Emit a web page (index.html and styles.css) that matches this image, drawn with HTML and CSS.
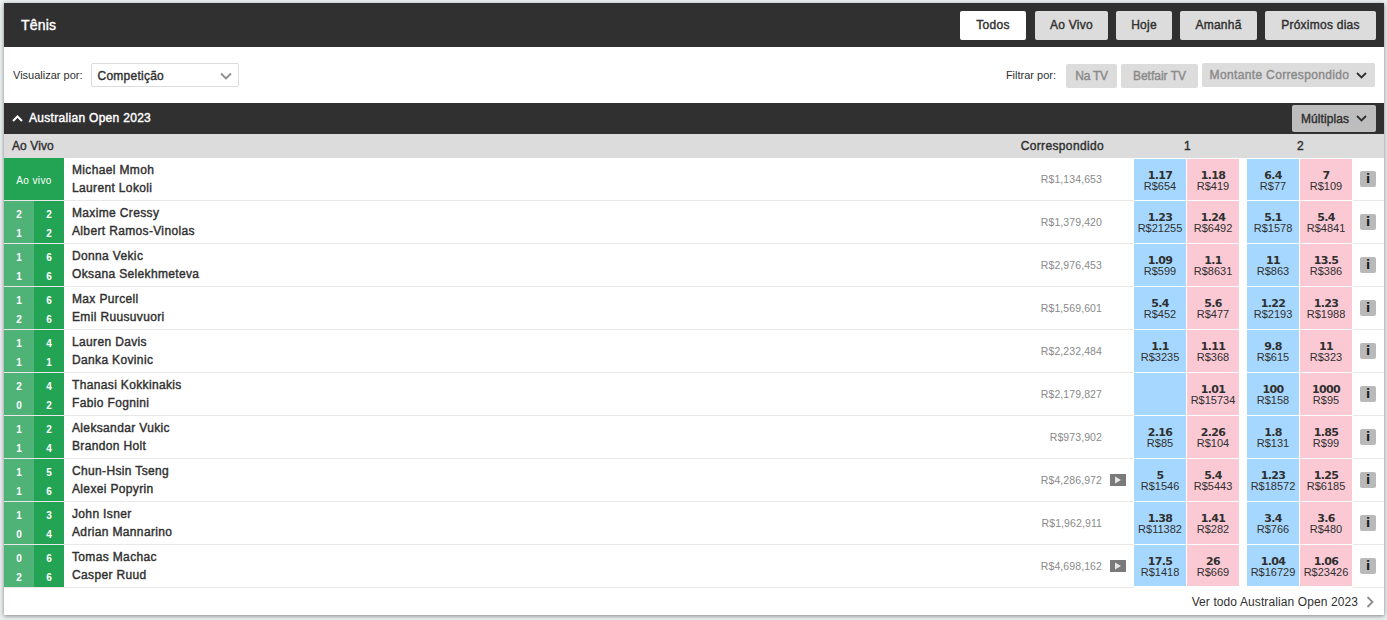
FILE: index.html
```html
<!DOCTYPE html>
<html lang="pt">
<head>
<meta charset="utf-8">
<title>Tênis</title>
<link rel="stylesheet" href="styles.css">
</head>
<body>
<main class="card">
  <header class="top">
    <h1 class="title">Tênis</h1>
    <nav class="tabs">
      <a class="tab tab-on">Todos</a><a class="tab">Ao Vivo</a><a class="tab">Hoje</a><a class="tab">Amanhã</a><a class="tab">Próximos dias</a>
    </nav>
  </header>
  <section class="filters">
    <span class="lbl">Visualizar por:</span>
    <div class="select"><span>Competição</span><svg class="chev" width="12" height="8" viewBox="0 0 12 8"><path d="M1 1.500l5 5 5-5" fill="none" stroke="#8c8c8c" stroke-width="1.800"/></svg></div>
    <span class="lbl lbl-right">Filtrar por:</span>
    <span class="fbtn fbtn-a">Na TV</span>
    <span class="fbtn fbtn-b">Betfair TV</span>
    <span class="fbtn fbtn-c">Montante Correspondido<svg class="chev" width="11" height="7" viewBox="0 0 11 7"><path d="M1 1l4.500 4.500L10 1" fill="none" stroke="#303030" stroke-width="1.800"/></svg></span>
  </section>
  <section class="comp">
    <svg width="11" height="7" viewBox="0 0 11 7"><path d="M1 6l4.500-4.500L10 6" fill="none" stroke="#fff" stroke-width="2"/></svg>
    <h2 class="comp-name">Australian Open 2023</h2>
    <span class="mult">Múltiplas<svg width="11" height="7" viewBox="0 0 11 7"><path d="M1 1l4.500 4.500L10 1" fill="none" stroke="#303030" stroke-width="1.800"/></svg></span>
  </section>
  <div class="cols">
    <span class="c-live">Ao Vivo</span>
    <span class="c-matched">Correspondido</span>
    <span class="c-1">1</span>
    <span class="c-2">2</span>
  </div>
  <div id="rows"></div>
  <footer class="foot">Ver todo Australian Open 2023<svg width="8" height="12" viewBox="0 0 8 12"><path d="M1.500 1l5 5-5 5" fill="none" stroke="#8c8c8c" stroke-width="1.800"/></svg></footer>
</main>
<script src="app.js"></script>
</body>
</html>
```
FILE: app.js
```js
var data = [
  [null,null,"Michael Mmoh","Laurent Lokoli","R$1,134,653",0,[["1.17","R$654"],["1.18","R$419"],["6.4","R$77"],["7","R$109"]]],
  ["21","22","Maxime Cressy","Albert Ramos-Vinolas","R$1,379,420",0,[["1.23","R$21255"],["1.24","R$6492"],["5.1","R$1578"],["5.4","R$4841"]]],
  ["11","66","Donna Vekic","Oksana Selekhmeteva","R$2,976,453",0,[["1.09","R$599"],["1.1","R$8631"],["11","R$863"],["13.5","R$386"]]],
  ["12","66","Max Purcell","Emil Ruusuvuori","R$1,569,601",0,[["5.4","R$452"],["5.6","R$477"],["1.22","R$2193"],["1.23","R$1988"]]],
  ["11","41","Lauren Davis","Danka Kovinic","R$2,232,484",0,[["1.1","R$3235"],["1.11","R$368"],["9.8","R$615"],["11","R$323"]]],
  ["20","42","Thanasi Kokkinakis","Fabio Fognini","R$2,179,827",0,[null,["1.01","R$15734"],["100","R$158"],["1000","R$95"]]],
  ["11","24","Aleksandar Vukic","Brandon Holt","R$973,902",0,[["2.16","R$85"],["2.26","R$104"],["1.8","R$131"],["1.85","R$99"]]],
  ["11","56","Chun-Hsin Tseng","Alexei Popyrin","R$4,286,972",1,[["5","R$1546"],["5.4","R$5443"],["1.23","R$18572"],["1.25","R$6185"]]],
  ["10","34","John Isner","Adrian Mannarino","R$1,962,911",0,[["1.38","R$11382"],["1.41","R$282"],["3.4","R$766"],["3.6","R$480"]]],
  ["02","66","Tomas Machac","Casper Ruud","R$4,698,162",1,[["17.5","R$1418"],["26","R$669"],["1.04","R$16729"],["1.06","R$23426"]]]
];
var html = "";
data.forEach(function (r) {
  var live = r[0] === null
    ? '<div class="live">Ao vivo</div>'
    : '<div class="score"><div class="set set-a"><span>' + r[0][0] + '</span><span>' + r[0][1] + '</span></div><div class="set set-b"><span>' + r[1][0] + '</span><span>' + r[1][1] + '</span></div></div>';
  var tv = r[5]
    ? '<span class="tv"><svg width="8" height="8" viewBox="0 0 8 8"><path d="M1 0.500l6 3.500-6 3.500z" fill="#e6e6e6"/></svg></span>'
    : '<span class="tv tv-off"></span>';
  var odds = r[6].map(function (o, i) {
    var cls = "odd " + (i % 2 ? "lay" : "back") + (i === 2 ? " gap" : "");
    return o ? '<div class="' + cls + '"><b>' + o[0] + '</b><span>' + o[1] + '</span></div>' : '<div class="' + cls + '"></div>';
  }).join("");
  html += '<div class="row">' + live +
    '<div class="names"><span>' + r[2] + '</span><span>' + r[3] + '</span></div>' +
    '<div class="matched">' + r[4] + '</div>' + tv +
    '<div class="odds">' + odds + '</div>' +
    '<div class="info-wrap"><span class="info">i</span></div></div>';
});
document.getElementById("rows").innerHTML = html;
```
FILE: styles.css
```css
* { box-sizing: border-box; }
html, body { height: 100%; }
body {
  margin: 0;
  padding: 3px 3px 5px 4px;
  background: #e9eeee;
  font-family: "Liberation Sans", Arial, sans-serif;
  font-size: 12px;
  color: #303030;
  overflow: hidden;
}
.card {
  background: #fff;
  height: 612px;
  box-shadow: 0 1px 4px rgba(0, 0, 0, .45);
}
.title, .tab, .select, .fbtn, .comp-name, .mult, .cols, .names {
  font-weight: 400;
  -webkit-text-stroke: .4px currentColor;
  letter-spacing: .35px;
}
.top {
  height: 44px;
  background: #303030;
  display: flex;
  align-items: center;
  justify-content: space-between;
  padding: 0 8px 0 17px;
}
.title { margin: 0; color: #fff; font-size: 14px; letter-spacing: .2px; }
.tabs { display: flex; gap: 8px; margin-top: 1px; }
.tab {
  height: 29px;
  line-height: 29px;
  text-align: center;
  background: #dcdcdc;
  border-radius: 2px;
  font-size: 12px;
  letter-spacing: .25px;
  color: #303030;
}
.tab:nth-child(1) { width: 66px; margin-right: 1px; background: #fff; }
.tab:nth-child(2) { width: 73px; }
.tab:nth-child(3) { width: 56px; }
.tab:nth-child(4) { width: 77px; }
.tab:nth-child(5) { width: 111px; }
.filters {
  height: 56px;
  display: flex;
  align-items: center;
  padding: 0 9px;
}
.lbl { font-size: 11px; color: #303030; }
.lbl-right { margin-left: auto; margin-right: 10px; }
.select {
  width: 148px;
  height: 24px;
  margin-left: 8px;
  padding: 1px 6px 0;
  border: 1px solid #dcdcdc;
  border-radius: 2px;
  display: flex;
  align-items: center;
  justify-content: space-between;
  font-size: 12px;
  letter-spacing: .25px;
  color: #303030;
}
.fbtn {
  height: 24px;
  display: inline-flex;
  align-items: center;
  justify-content: center;
  gap: 7px;
  background: #dcdcdc;
  color: #8a8a8a;
  font-size: 12px;
  border-radius: 2px;
  margin-left: 4px;
}
.fbtn-a { width: 51px; margin-left: 0; margin-top: 2px; letter-spacing: -.3px; }
.fbtn-b { width: 77px; margin-top: 2px; letter-spacing: 0; }
.fbtn-c { width: 173px; }
.comp {
  height: 31px;
  background: #303030;
  display: flex;
  align-items: center;
  padding: 0 8px;
  color: #fff;
}
.comp-name { margin: 0 0 1px 6px; font-size: 12px; letter-spacing: .3px; }
.mult {
  margin-left: auto;
  width: 84px;
  height: 27px;
  display: inline-flex;
  align-items: center;
  justify-content: center;
  gap: 7px;
  background: #bdbdbd;
  border-radius: 2px;
  color: #303030;
  font-size: 12px;
  letter-spacing: .1px;
}
.cols {
  height: 24px;
  background: #dcdcdc;
  display: flex;
  align-items: center;
  font-size: 12px;
  letter-spacing: .35px;
}
.c-live { margin-left: 8px; letter-spacing: .1px; }
.c-matched { margin-left: auto; width: 100px; text-align: right; }
.c-1, .c-2 { width: 113px; text-align: center; }
.c-1 { margin-left: 27px; }
.c-2 { margin-right: 27px; }
.row {
  height: 43px;
  display: flex;
  border-bottom: 1px solid #e9e9e9;
  background: #fff;
}
.live {
  width: 60px;
  padding-top: 3px;
  background: #23a455;
  color: #fff;
  font-size: 10px;
  display: flex;
  align-items: center;
  justify-content: center;
  letter-spacing: .4px;
}
.score { width: 60px; display: flex; }
.set {
  flex: 1;
  padding-top: 3px;
  display: flex;
  flex-direction: column;
  justify-content: center;
  gap: 8px;
  align-items: center;
  color: #fff;
  font-size: 10px;
  font-weight: 700;
  line-height: 11px;
}
.set-a { background: #4fb378; }
.set-b { background: #23a455; }
.names {
  flex: 1;
  display: flex;
  flex-direction: column;
  justify-content: center;
  gap: 3px;
  padding-left: 8px;
  font-size: 12px;
  line-height: 15px;
  color: #303030;
}
.matched {
  width: 100px;
  align-self: center;
  text-align: right;
  font-size: 10.500px;
  color: #8a8a8a;
  letter-spacing: .1px;
  margin-top: -1px;
}
.tv {
  width: 16px;
  height: 12px;
  margin: 0 8px;
  align-self: center;
  background: #7a7a7a;
  display: flex;
  align-items: center;
  justify-content: center;
}
.tv-off { background: none; }
.odds {
  display: flex;
  height: 43px;
  margin-bottom: -1px;
  border-bottom: 1px solid #fff;
  background: #fff;
  position: relative;
}
.row:first-child .odd { margin-top: 1px; }
.row:last-child .odd { margin-bottom: 1px; }
.odd {
  width: 52px;
  margin-right: 1px;
  padding-top: 2px;
  display: flex;
  flex-direction: column;
  align-items: center;
  justify-content: center;
  line-height: 11px;
  color: #303030;
}
.odd b { font-family: "DejaVu Sans", Verdana, sans-serif; font-size: 11px; letter-spacing: -.7px; }
.odd span { font-size: 11px; }
.back { background: #a6d8ff; }
.lay { background: #fac9d4; }
.gap { margin-left: 7px; }
.info-wrap { width: 31px; padding-right: 8px; display: flex; align-items: center; justify-content: flex-end; }
.info {
  width: 16px;
  height: 16px;
  background: #b9b9b9;
  border-radius: 2px;
  font-family: "DejaVu Sans", sans-serif;
  font-size: 12px;
  font-weight: 700;
  line-height: 16px;
  text-align: center;
  color: #202020;
}
.foot {
  height: 27px;
  display: flex;
  align-items: center;
  justify-content: flex-end;
  gap: 8px;
  padding-right: 10px;
  font-size: 12px;
  letter-spacing: .1px;
  color: #303030;
}
```
